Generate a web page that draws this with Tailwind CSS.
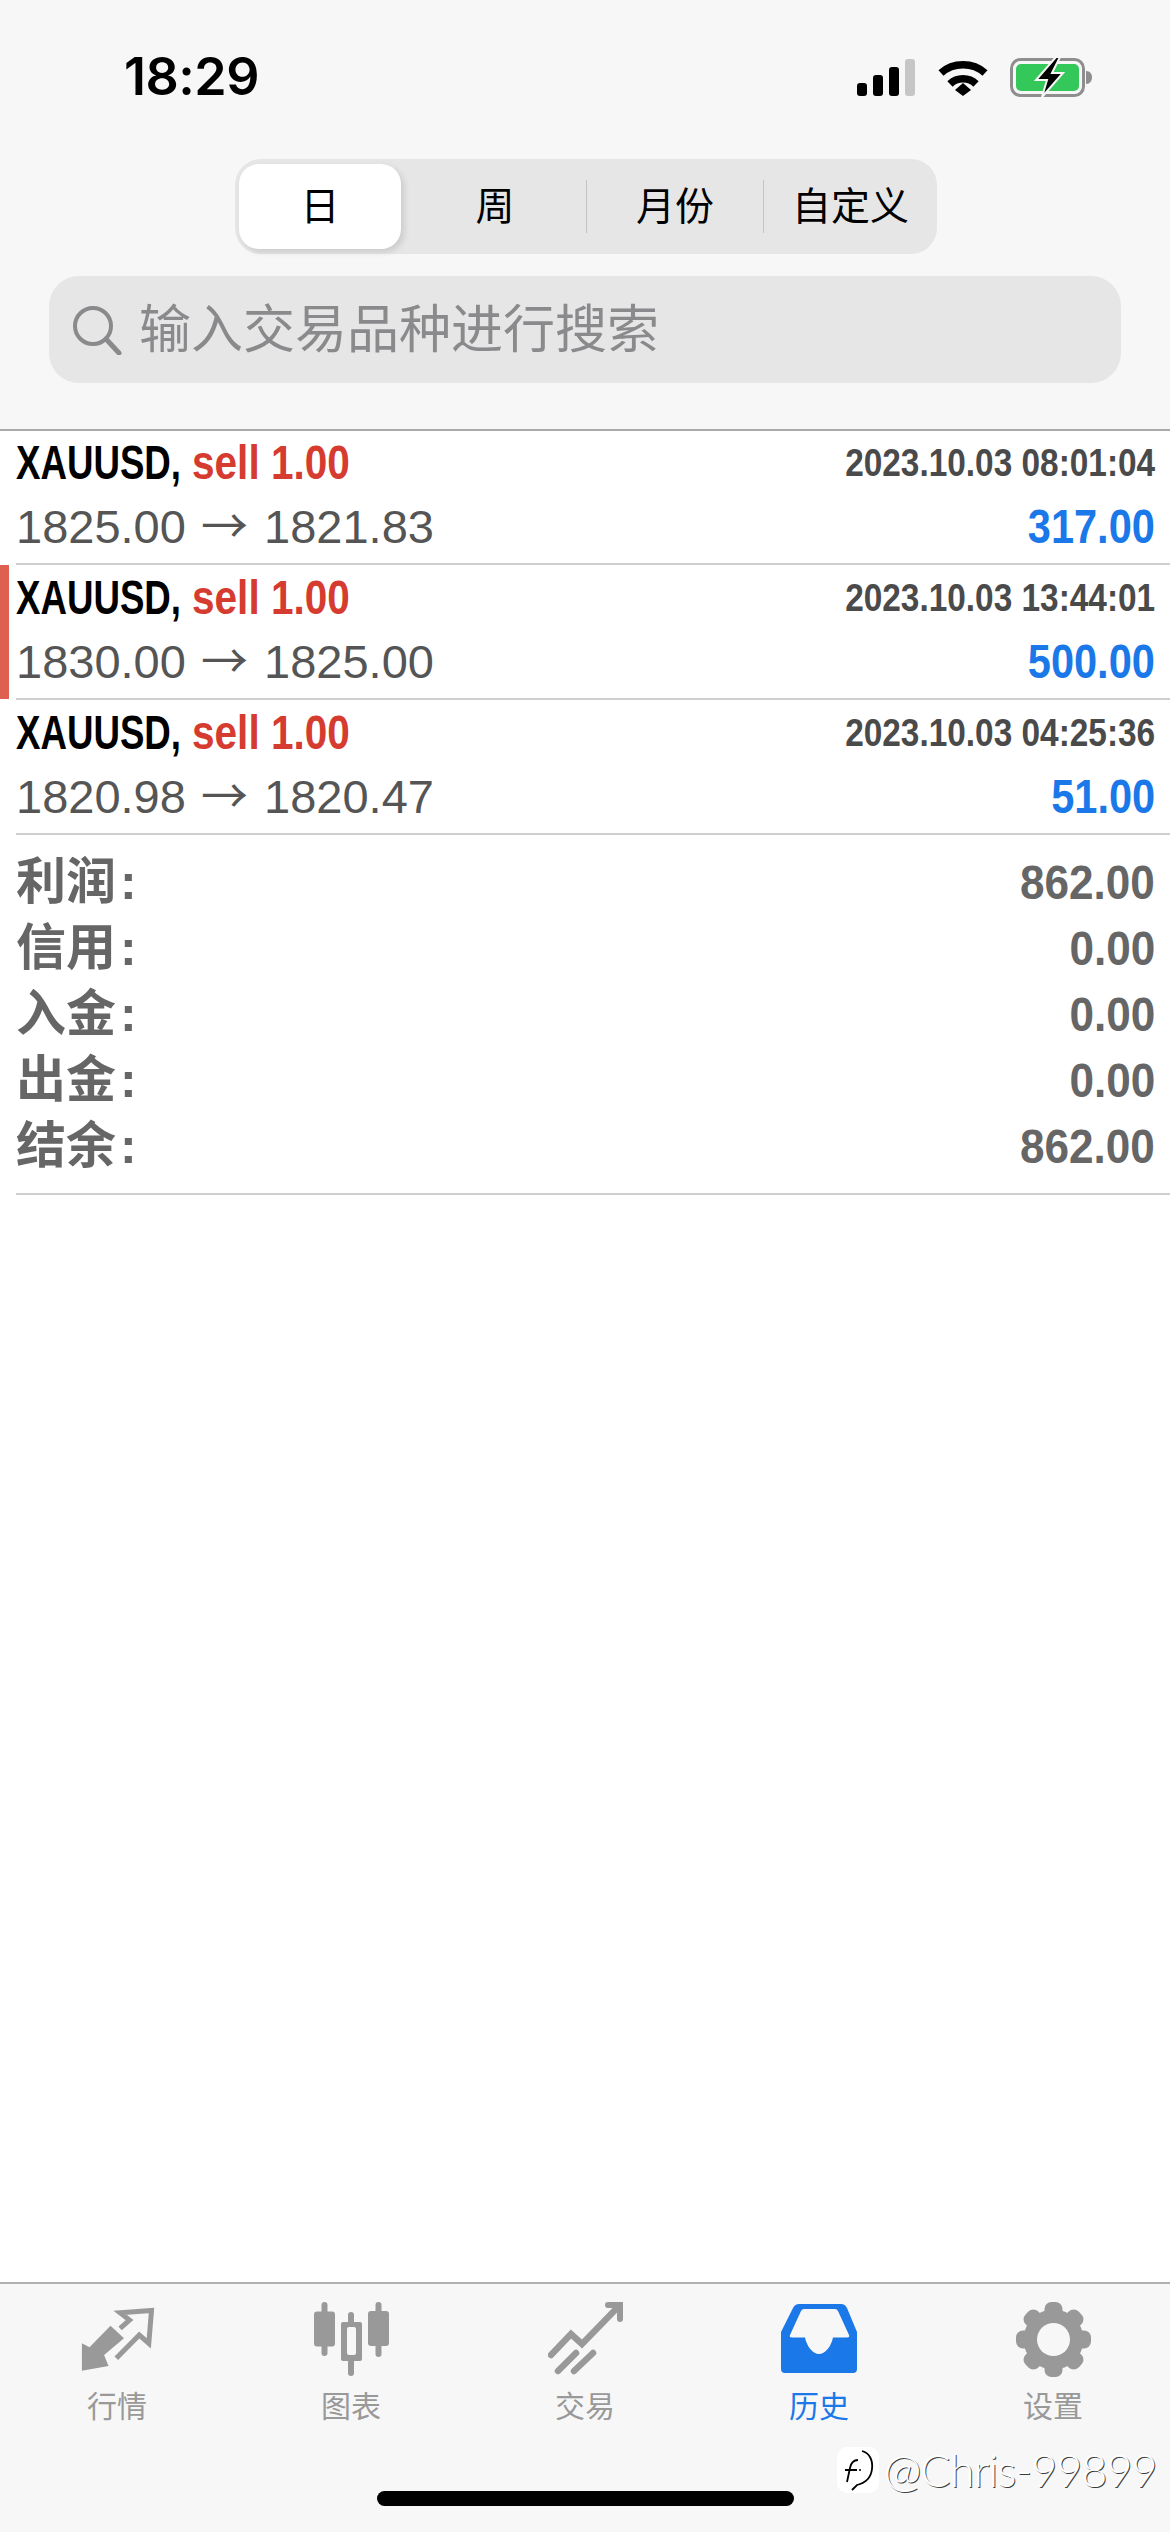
<!DOCTYPE html>
<html lang="zh-CN">
<head>
  <meta charset="UTF-8">
  <title>历史</title>
  <script src="https://cdn.jsdelivr.net/npm/@tailwindcss/browser@4"></script>
</head>
<body class="bg-white">
<div class="relative w-[1170px] h-[2532px] overflow-hidden flex flex-col bg-white [font-family:'Liberation_Sans','Noto_Sans_CJK_SC',sans-serif]">

  <!-- header -->
  <header class="h-[431px] shrink-0 bg-[#f7f7f7] border-b-[2px] border-[#a9a9a9]">
    <div class="h-[159px] pt-[51px] pl-[124px] pr-[76px] flex justify-between items-start">
      <span class="text-[52px] leading-[52px] font-semibold tracking-[-0.5px] text-black [font-family:Inter,sans-serif]">18:29</span>
      <div class="flex items-start pt-[7px]">
        <svg class="w-[58px] h-[38px] mt-[1px]" viewBox="0 0 58 38">
          <rect x="0" y="24" width="10" height="13" rx="3" fill="#000"/>
          <rect x="16" y="16" width="10" height="21" rx="3" fill="#000"/>
          <rect x="32" y="8" width="10" height="29" rx="3" fill="#000"/>
          <rect x="48" y="0" width="10" height="37" rx="3" fill="#c6c6c6"/>
        </svg>
        <svg class="w-[50px] h-[38px] ml-[23px] mt-[1px]" viewBox="0 0 50 38">
          <path d="M3 14C15 3 35 3 47 14" fill="none" stroke="#000" stroke-width="7.5"/>
          <path d="M12 25C19 18 31 18 38 25" fill="none" stroke="#000" stroke-width="7.5"/>
          <path d="M17 31L25 24L33 31L25 37Z" fill="#000"/>
        </svg>
        <svg class="w-[84px] h-[42px] ml-[22px] -mt-[2px]" viewBox="0 0 84 42">
          <rect x="1.5" y="3.5" width="72" height="36" rx="9" fill="#f7f7f7" stroke="#8e8e8e" stroke-width="3"/>
          <rect x="6" y="8" width="63" height="27" rx="5" fill="#34c759"/>
          <path d="M76 15C80 15 82 18 82 21C82 25 80 28 76 28Z" fill="#8e8e8e"/>
          <path d="M46 1L26 24H37L32 41L53 17H42L50 1Z" fill="#000" stroke="#f7f7f7" stroke-width="2"/>
        </svg>
      </div>
    </div>

    <div class="ml-[235px] w-[702px] h-[95px] rounded-[26px] bg-[#e6e6e7] pl-[4px] flex items-center text-[39px] leading-[46px] text-black">
      <div class="w-[162px] h-[85px] rounded-[20px] bg-white shadow-[3px_3px_6px_rgba(0,0,0,0.12)] flex items-center justify-center">日</div>
      <div class="w-[185px] pl-[3px] flex justify-center">周</div>
      <div class="w-[177px] h-[53px] flex items-center justify-center border-l-[1.5px] border-[#c4c4c4]">月份</div>
      <div class="w-[174px] h-[53px] flex items-center justify-center border-l-[1.5px] border-[#c4c4c4]">自定义</div>
    </div>

    <div class="ml-[49px] mt-[22px] w-[1072px] h-[107px] rounded-[30px] bg-[#e6e6e7] flex items-center pl-[23px]">
      <svg class="w-[50px] h-[50px] shrink-0" viewBox="0 0 50 50" fill="none" stroke="#8a8a8c">
        <circle cx="21" cy="21" r="18" stroke-width="4"/>
        <path d="M34 34L47 48" stroke-width="5" stroke-linecap="round"/>
      </svg>
      <span class="ml-[17px] text-[52px] leading-[60px] text-[#8a8a8c]">输入交易品种进行搜索</span>
    </div>
  </header>

  <!-- deals -->
  <main class="flex-1">
    <div class="relative h-[134px] pl-4">
      <div class="h-[134px] border-b-[2px] border-[#cfcfcf]">
        <div class="h-[64px] flex items-center whitespace-nowrap">
          <span class="w-[176px] shrink-0 origin-left scale-x-[0.764] text-[48px] leading-[50px] font-bold text-black">XAUUSD,</span>
          <span class="origin-left scale-x-[0.845] text-[48px] leading-[50px] font-bold text-[#d63b2f]">sell 1.00</span>
          <span class="ml-auto mr-[15px] origin-right scale-x-[0.856] text-[39px] leading-[50px] font-bold text-[#4a4a4a]">2023.10.03 08:01:04</span>
        </div>
        <div class="h-[64px] flex items-center justify-between">
          <span class="text-[47px] leading-[50px] text-[#555]">1825.00 <span class="ml-[2px] mr-[3px] leading-[0] [font-family:'Noto_Sans_CJK_SC',sans-serif]">→</span> 1821.83</span>
          <span class="mr-[15px] origin-right scale-x-[0.865] text-[48px] leading-[50px] font-bold text-[#1a78e8]">317.00</span>
        </div>
      </div>
    </div>
    <div class="relative h-[135px] pl-4">
      <div class="absolute left-0 top-0 bottom-[1px] w-[9px] bg-[#e0604f]"></div>
      <div class="h-[135px] pt-[1px] border-b-[2px] border-[#cfcfcf]">
        <div class="h-[64px] flex items-center whitespace-nowrap">
          <span class="w-[176px] shrink-0 origin-left scale-x-[0.764] text-[48px] leading-[50px] font-bold text-black">XAUUSD,</span>
          <span class="origin-left scale-x-[0.845] text-[48px] leading-[50px] font-bold text-[#d63b2f]">sell 1.00</span>
          <span class="ml-auto mr-[15px] origin-right scale-x-[0.856] text-[39px] leading-[50px] font-bold text-[#4a4a4a]">2023.10.03 13:44:01</span>
        </div>
        <div class="h-[64px] flex items-center justify-between">
          <span class="text-[47px] leading-[50px] text-[#555]">1830.00 <span class="ml-[2px] mr-[3px] leading-[0] [font-family:'Noto_Sans_CJK_SC',sans-serif]">→</span> 1825.00</span>
          <span class="mr-[15px] origin-right scale-x-[0.865] text-[48px] leading-[50px] font-bold text-[#1a78e8]">500.00</span>
        </div>
      </div>
    </div>
    <div class="relative h-[135px] pl-4">
      <div class="h-[135px] pt-[1px] border-b-[2px] border-[#cfcfcf]">
        <div class="h-[64px] flex items-center whitespace-nowrap">
          <span class="w-[176px] shrink-0 origin-left scale-x-[0.764] text-[48px] leading-[50px] font-bold text-black">XAUUSD,</span>
          <span class="origin-left scale-x-[0.845] text-[48px] leading-[50px] font-bold text-[#d63b2f]">sell 1.00</span>
          <span class="ml-auto mr-[15px] origin-right scale-x-[0.856] text-[39px] leading-[50px] font-bold text-[#4a4a4a]">2023.10.03 04:25:36</span>
        </div>
        <div class="h-[64px] flex items-center justify-between">
          <span class="text-[47px] leading-[50px] text-[#555]">1820.98 <span class="ml-[2px] mr-[3px] leading-[0] [font-family:'Noto_Sans_CJK_SC',sans-serif]">→</span> 1820.47</span>
          <span class="mr-[15px] origin-right scale-x-[0.865] text-[48px] leading-[50px] font-bold text-[#1a78e8]">51.00</span>
        </div>
      </div>
    </div>

    <!-- totals -->
    <div class="ml-4 pt-[14px] pb-[14px] border-b-[2px] border-[#cfcfcf] text-[#666] font-bold">
      <div class="h-[66px] flex items-center justify-between">
        <span class="text-[50px] leading-[66px]">利润<span class="ml-[4px]">:</span></span>
        <span class="mr-[15px] origin-right scale-x-[0.9] text-[49px] leading-[66px]">862.00</span>
      </div>
      <div class="h-[66px] flex items-center justify-between">
        <span class="text-[50px] leading-[66px]">信用<span class="ml-[4px]">:</span></span>
        <span class="mr-[15px] origin-right scale-x-[0.9] text-[49px] leading-[66px]">0.00</span>
      </div>
      <div class="h-[66px] flex items-center justify-between">
        <span class="text-[50px] leading-[66px]">入金<span class="ml-[4px]">:</span></span>
        <span class="mr-[15px] origin-right scale-x-[0.9] text-[49px] leading-[66px]">0.00</span>
      </div>
      <div class="h-[66px] flex items-center justify-between">
        <span class="text-[50px] leading-[66px]">出金<span class="ml-[4px]">:</span></span>
        <span class="mr-[15px] origin-right scale-x-[0.9] text-[49px] leading-[66px]">0.00</span>
      </div>
      <div class="h-[66px] flex items-center justify-between">
        <span class="text-[50px] leading-[66px]">结余<span class="ml-[4px]">:</span></span>
        <span class="mr-[15px] origin-right scale-x-[0.9] text-[49px] leading-[66px]">862.00</span>
      </div>
    </div>
  </main>

  <!-- tab bar -->
  <footer class="h-[250px] shrink-0 bg-[#f7f7f7] border-t-[2px] border-[#b0b0b0]">
    <nav class="grid grid-cols-5 pt-[18px] text-[30px] leading-[30px] text-[#999]">
      <div class="flex flex-col items-center">
        <svg class="w-[75px] h-[75px]" viewBox="0 0 75 75">
          <g transform="translate(1.5 6)">
            <path d="M29 17.7L42.5 30.3L22.6 47L27 58L.4 62.7V35.3L8 39.3Z" fill="#999"/>
            <path d="M34.8 50.3L57.8 27L67.3 35.3L70 2.5L38.6 4.7L48 12L38.6 20.3" fill="none" stroke="#999" stroke-width="5"/>
          </g>
        </svg>
        <span class="mt-[15px]">行情</span>
      </div>
      <div class="flex flex-col items-center">
        <svg class="w-[75px] h-[75px]" viewBox="0 0 75 75" fill="#999">
          <rect x="7.5" y="0" width="6" height="54" rx="3"/>
          <rect x="0" y="9.5" width="21" height="35" rx="3"/>
          <rect x="34" y="10" width="6" height="64" rx="3"/>
          <rect x="27" y="20" width="21" height="39" rx="2"/>
          <rect x="33" y="25" width="9" height="28" rx="2" fill="#f7f7f7"/>
          <rect x="61.5" y="0" width="6" height="55" rx="3"/>
          <rect x="54" y="9" width="21" height="35" rx="3"/>
        </svg>
        <span class="mt-[15px]">图表</span>
      </div>
      <div class="flex flex-col items-center">
        <svg class="w-[75px] h-[75px]" viewBox="0 0 75 75" fill="none" stroke="#999" stroke-linecap="round">
          <path d="M3 53L23 32L34 42L70 5" stroke-width="6.5"/>
          <path d="M60 3H72V17" stroke-width="6"/>
          <path d="M10 69L28 51M26 69L45 51" stroke-width="6.5"/>
        </svg>
        <span class="mt-[15px]">交易</span>
      </div>
      <div class="flex flex-col items-center text-[#1a78e8]">
        <svg class="w-[76px] h-[75px]" viewBox="0 0 76 75">
          <path fill="#1a78e8" fill-rule="evenodd" d="M18 2H60Q64 2 66 6L76 30V67Q76 71 72 71H4Q0 71 0 67V30L12 6Q14 2 18 2ZM23 7Q21 7 20 9L9 33Q8 35.500 11 35.500H24C26 45 32 52 38 52C44 52 50 45 52 35.500H66Q69 35.500 68 33L57 9Q56 7 54 7Z"/>
        </svg>
        <span class="mt-[15px]">历史</span>
      </div>
      <div class="flex flex-col items-center">
        <svg class="w-[75px] h-[75px]" viewBox="0 0 75 75" fill="#999">
          <circle cx="37.500" cy="37.500" r="30"/>
          <g>
            <rect x="28.500" y="0" width="18" height="75" rx="7"/>
            <rect x="28.500" y="0" width="18" height="75" rx="7" transform="rotate(45 37.500 37.500)"/>
            <rect x="28.500" y="0" width="18" height="75" rx="7" transform="rotate(90 37.500 37.500)"/>
            <rect x="28.500" y="0" width="18" height="75" rx="7" transform="rotate(135 37.500 37.500)"/>
          </g>
          <circle cx="37.500" cy="37.500" r="16.500" fill="#f7f7f7"/>
        </svg>
        <span class="mt-[15px]">设置</span>
      </div>
    </nav>
    <div class="mx-auto mt-[69px] w-[417px] h-[15px] rounded-full bg-black"></div>
  </footer>

  <!-- watermark -->
  <div class="absolute left-[837px] top-[2447px] flex items-center">
    <div class="w-[42px] h-[46px] rounded-[10px] bg-white flex items-center justify-center">
      <svg class="w-[36px] h-[44px]" viewBox="0 0 36 44" fill="none" stroke="#000" stroke-width="1.800">
        <path d="M22 3C30 5 33 13 32 21C31 30 25 35 17 37L12 42"/>
        <path d="M18 12C13 12 11 15 10 20L7 34M5 22H17"/>
        <circle cx="20" cy="22" r="1" fill="#000" stroke="none"/>
      </svg>
    </div>
    <span class="ml-[5px] text-[45px] leading-[46px] font-light text-white tracking-[-1px] [font-family:Lato,sans-serif] [text-shadow:1px_1px_0_rgba(0,0,0,0.75)]">@Chris-99899</span>
  </div>
</div>
</body>
</html>
